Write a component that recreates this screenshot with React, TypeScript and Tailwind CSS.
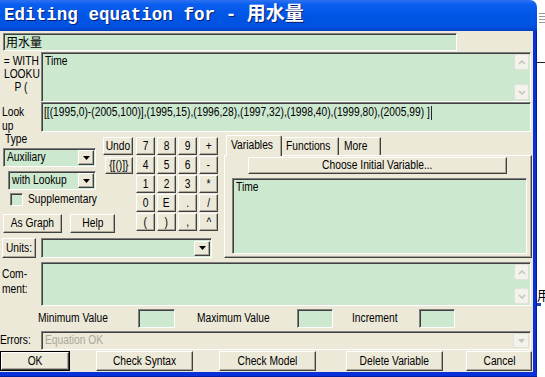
import React from "react";

const FONT = "font-['Liberation_Sans','Noto_Sans_CJK_SC',sans-serif]";
const RAISED =
  "bg-[#ece9d8] border border-t-white border-l-white border-r-[#404040] border-b-[#404040] shadow-[inset_-1px_-1px_0_#aca899]";
const SUNKEN =
  "bg-[#cce8cf] border border-t-[#808080] border-l-[#808080] border-r-white border-b-white shadow-[inset_1px_1px_0_#404040]";
const SUNKEN_GREY =
  "bg-[#ece9d8] border border-t-[#808080] border-l-[#808080] border-r-white border-b-white shadow-[inset_1px_1px_0_#404040]";

function T({ children, c = false }: { children?: React.ReactNode; c?: boolean }) {
  return (
    <span
      className={`inline-block whitespace-nowrap scale-x-[0.82] ${c ? "origin-center" : "origin-left"}`}
    >
      {children}
    </span>
  );
}

function Btn({ className = "", children }: { className?: string; children?: React.ReactNode }) {
  return (
    <div className={`${RAISED} shrink-0 flex items-center justify-center leading-none text-black ${className}`}>
      <T c>{children}</T>
    </div>
  );
}

function Tri({ color = "#000" }: { color?: string }) {
  return (
    <svg width="7" height="4" viewBox="0 0 7 4">
      <polygon points="0,0 7,0 3.5,4" fill={color} />
    </svg>
  );
}

function Combo({ className = "", children }: { className?: string; children?: React.ReactNode }) {
  return (
    <div className={`${SUNKEN} shrink-0 flex items-center ${className}`}>
      <div className="flex-1 min-w-0 pl-[3px] leading-none">
        <T>{children}</T>
      </div>
      <div className={`${RAISED} shrink-0 w-[16px] h-[15px] mr-[1px] flex items-center justify-center`}>
        <Tri />
      </div>
    </div>
  );
}

function ScrollBtn({ up }: { up?: boolean }) {
  return (
    <div className="w-[15px] h-[16px] rounded-[2px] bg-[#f3f2ec] border border-[#e2e1da] flex items-center justify-center">
      <svg width="8" height="5" viewBox="0 0 8 5">
        <polyline
          points={up ? "1,4 4,1 7,4" : "1,1 4,4 7,1"}
          fill="none"
          stroke="#c4c3bd"
          strokeWidth="1.5"
        />
      </svg>
    </div>
  );
}

function ScrollCol() {
  return (
    <div className="flex flex-col justify-between py-[1px] pr-[1px] h-full">
      <ScrollBtn up />
      <ScrollBtn />
    </div>
  );
}

const KEYS = ["7", "8", "9", "+", "4", "5", "6", "-", "1", "2", "3", "*", "0", "E", ".", "/", "(", ")", ",", "^"];

export default function App() {
  return (
    <div className={`w-[545px] h-[377px] flex overflow-hidden bg-white text-[12.5px] text-black ${FONT}`}>
      <div className="w-[537px] h-[377px] flex flex-col shrink-0">
        {/* Title bar */}
        <div className="h-[31px] rounded-tr-[7px] bg-[linear-gradient(180deg,#2f72f0_0%,#0a5ef0_14%,#0055e5_50%,#0052e1_85%,#0042c8_100%)] flex items-center pl-[4px]">
          <span className="text-white font-bold text-[17.6px] leading-none font-['Liberation_Mono','Noto_Sans_CJK_SC',monospace] [text-shadow:1px_1px_0_#0a1e6e] whitespace-pre">
            Editing equation for - <span className="text-[19px]">用水量</span>
          </span>
        </div>
        <div className="flex h-[341px]">
          {/* Client */}
          <div className="w-[533px] h-[341px] bg-[#ece9d8] flex flex-col">
            {/* Name */}
            <div className={`${SUNKEN} mt-[2px] ml-[3px] w-[454px] h-[18px] flex items-center pl-[2px] font-['Noto_Sans_CJK_SC',sans-serif] text-[12px] leading-none`}>
              用水量
            </div>
            {/* Equation */}
            <div className="flex mt-[1px] h-[50px]">
              <div className="w-[41px] shrink-0 text-center leading-[13px] pt-[3px]">
                <div><T c>= WITH</T></div>
                <div><T c>LOOKU</T></div>
                <div><T c>P (</T></div>
              </div>
              <div className={`${SUNKEN} w-[490px] h-[50px] flex`}>
                <div className="flex-1 pl-[3px] pt-[2px] leading-[13px]"><T>Time</T></div>
                <ScrollCol />
              </div>
            </div>
            {/* Lookup */}
            <div className="flex h-[30px]">
              <div className="w-[41px] shrink-0 pl-[2px] leading-[14px] pt-[3px]">
                <div><T>Look</T></div>
                <div><T>up</T></div>
              </div>
              <div className={`${SUNKEN} w-[490px] h-[30px] pl-[2px] pt-[3px] leading-[13px]`}>
                <T>
                  [[(1995,0)-(2005,100)],(1995,15),(1996,28),(1997,32),(1998,40),(1999,80),(2005,99) ]
                  <span className="inline-block w-[1px] h-[14px] bg-black ml-[2px] align-top" />
                </T>
              </div>
            </div>
            {/* Middle */}
            <div className="flex h-[126px]">
              <div className="w-[224px] shrink-0 flex flex-col">
                <div className="flex">
                  <div className="w-[136px] shrink-0 flex flex-col">
                    <div className="flex">
                      <div className="w-[100px] shrink-0 flex flex-col">
                        <div className="h-[13px] mt-[1px] pl-[5px] leading-[13px]"><T>Type</T></div>
                        <Combo className="mt-[2px] ml-[3px] w-[93px] h-[19px]">Auxiliary</Combo>
                        <Combo className="mt-[4px] ml-[8px] w-[88px] h-[19px]">with Lookup</Combo>
                        <div className="mt-[3px] h-[13px] flex items-center">
                          <div className={`${SUNKEN} shrink-0 ml-[10px] w-[13px] h-[13px]`} />
                          <span className="ml-[5px] leading-none whitespace-nowrap"><T>Supplementary</T></span>
                        </div>
                      </div>
                      <div className="flex flex-col ml-[3px] mt-[5px]">
                        <Btn className="w-[30px] h-[18px]">Undo</Btn>
                        <Btn className="mt-[2px] ml-[2px] w-[28px] h-[17px]">{"{[()]}"}</Btn>
                      </div>
                    </div>
                    <div className="flex mt-[8px]">
                      <Btn className="ml-[3px] w-[59px] h-[19px]">As Graph</Btn>
                      <Btn className="ml-[8px] w-[45px] h-[19px]">Help</Btn>
                    </div>
                  </div>
                  <div className="mt-[5px] grid grid-cols-[19px_19px_19px_19px] auto-rows-[18px] gap-x-[2px] gap-y-[1px]">
                    {KEYS.map((k) => (
                      <Btn key={k} className="w-[19px] h-[18px]">
                        {k}
                      </Btn>
                    ))}
                  </div>
                </div>
                <div className="flex mt-[5px] h-[20px]">
                  <Btn className="ml-[2px] w-[34px] h-[20px]">Units:</Btn>
                  <Combo className="ml-[5px] w-[171px] h-[20px]" />
                </div>
              </div>
              {/* Tabs */}
              <div className="w-[308px] shrink-0 flex flex-col mt-[3px]">
                <div className="flex h-[20px] items-end relative z-10">
                  <div className="ml-[2px] w-[56px] h-[21px] -mb-[1px] bg-[#ece9d8] border-t border-l border-t-white border-l-white border-r border-r-[#404040] shadow-[inset_-1px_0_0_#aca899] rounded-t-[2px] pl-[4px] pt-[3px] leading-[13px]">
                    <T>Variables</T>
                  </div>
                  <div className="w-[57px] h-[18px] bg-[#ece9d8] border-t border-t-white border-r border-r-[#404040] shadow-[inset_-1px_0_0_#aca899] pl-[4px] pt-[2px] leading-[13px]">
                    <T>Functions</T>
                  </div>
                  <div className="w-[42px] h-[18px] bg-[#ece9d8] border-t border-t-white border-r border-r-[#404040] shadow-[inset_-1px_0_0_#aca899] pl-[5px] pt-[2px] leading-[13px]">
                    <T>More</T>
                  </div>
                </div>
                <div className="h-[103px] border border-t-white border-l-white border-r-[#404040] border-b-[#404040] shadow-[inset_-1px_-1px_0_#aca899] flex flex-col">
                  <Btn className="mt-[1px] ml-[23px] w-[259px] h-[17px]">Choose Initial Variable...</Btn>
                  <div className={`${SUNKEN} mt-[4px] ml-[7px] w-[295px] h-[76px] pl-[3px] pt-[2px] leading-[13px]`}>
                    <T>Time</T>
                  </div>
                </div>
              </div>
            </div>
            {/* Comment */}
            <div className="flex mt-[4px] h-[44px]">
              <div className="w-[41px] shrink-0 pl-[2px] pt-[5px] leading-[15px]">
                <div><T>Com-</T></div>
                <div><T>ment:</T></div>
              </div>
              <div className={`${SUNKEN} w-[490px] h-[44px] flex`}>
                <div className="flex-1" />
                <ScrollCol />
              </div>
            </div>
            {/* Min / Max */}
            <div className="flex mt-[3px] h-[19px] items-center">
              <div className="w-[138px] shrink-0 pl-[38px] leading-none"><T>Minimum Value</T></div>
              <div className={`${SUNKEN} shrink-0 w-[37px] h-[19px]`} />
              <div className="w-[122px] shrink-0 pl-[22px] leading-none"><T>Maximum Value</T></div>
              <div className={`${SUNKEN} shrink-0 w-[36px] h-[19px]`} />
              <div className="w-[86px] shrink-0 pl-[19px] leading-none"><T>Increment</T></div>
              <div className={`${SUNKEN} shrink-0 w-[36px] h-[19px]`} />
            </div>
            {/* Errors */}
            <div className="flex mt-[3px] h-[19px] items-center">
              <div className="w-[41px] shrink-0 leading-none"><T>Errors:</T></div>
              <div className={`${SUNKEN_GREY} w-[490px] h-[19px] flex items-center`}>
                <div className="flex-1 pl-[3px] text-[#aca899] leading-none"><T>Equation OK</T></div>
                <div className="w-[16px] h-[15px] mr-[1px] rounded-[2px] bg-[#f3f2ec] border border-[#e2e1da] flex items-center justify-center">
                  <Tri color="#c4c3bd" />
                </div>
              </div>
            </div>
            {/* Buttons */}
            <div className="flex mt-[1px] h-[20px]">
              <div className="w-[70px] h-[20px] shrink-0 border border-black flex">
                <Btn className="w-full h-full">OK</Btn>
              </div>
              <Btn className="ml-[26px] w-[97px] h-[20px]">Check Syntax</Btn>
              <Btn className="ml-[26px] w-[97px] h-[20px]">Check Model</Btn>
              <Btn className="ml-[30px] w-[97px] h-[20px]">Delete Variable</Btn>
              <Btn className="ml-[23px] w-[66px] h-[20px]">Cancel</Btn>
            </div>
          </div>
          {/* Right frame */}
          <div className="w-[4px] h-[341px] bg-[#0831d9] border-r border-r-[#001ea0]" />
        </div>
        <div className="h-[5px] bg-[#0831d9] border-b border-b-[#001ea0]" />
      </div>
      {/* Outside strip */}
      <div className="w-[8px] h-[377px] shrink-0 flex flex-col bg-white">
        <div className="h-[13px]" />
        <div className="h-[14px] ml-[2px] flex flex-col gap-[2px]">
          <div className="h-[1px] bg-[#9a9a9a]" />
          <div className="h-[1px] bg-[#9a9a9a]" />
          <div className="h-[1px] bg-[#9a9a9a]" />
          <div className="h-[1px] bg-[#9a9a9a]" />
        </div>
        <div className="h-[35px]" />
        <div className="h-[1px] bg-[#222]" />
        <div className="h-[224px]" />
        <div className="h-[16px] w-[8px] overflow-hidden font-['Noto_Sans_CJK_SC',sans-serif] text-[13px] leading-[16px] whitespace-nowrap">用</div>
        <div className="h-[3px] w-[4px] bg-[#2040c0]" />
      </div>
    </div>
  );
}
